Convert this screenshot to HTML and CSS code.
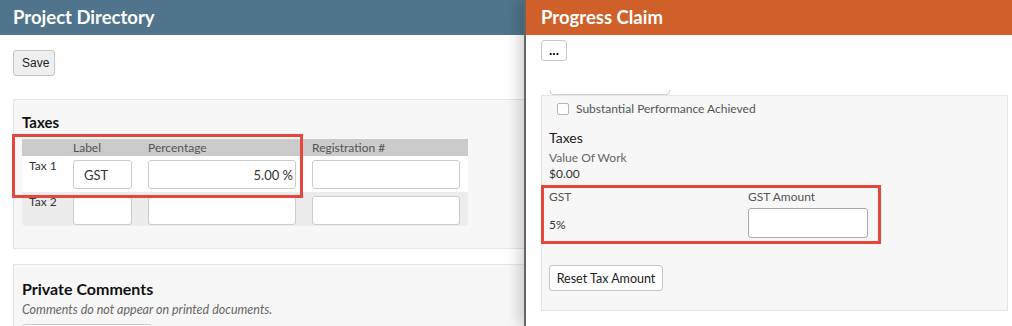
FILE: index.html
```html
<!DOCTYPE html>
<html lang="en">
<head>
  <meta charset="UTF-8" />
  <meta name="viewport" content="width=device-width, initial-scale=1.0" />
  <title>Project Directory</title>
  <link rel="stylesheet" href="styles.css">
</head>
<body>
  <div class="panes">
    <section class="pane pane-left">
      <header class="pane-header">Project Directory</header>
      <div class="pane-body">
        <button class="btn btn-save">Save</button>

        <div class="card card-taxes">
          <h2>Taxes</h2>
          <div class="tax-table">
            <div class="tax-row tax-head">
              <div class="col-name"></div>
              <div class="col-label">Label</div>
              <div class="col-pct">Percentage</div>
              <div class="col-reg">Registration #</div>
            </div>
            <div class="tax-row">
              <div class="col-name">Tax 1</div>
              <div class="col-label"><input class="field" value="GST"></div>
              <div class="col-pct"><input class="field field-num" value="5.00 %"></div>
              <div class="col-reg"><input class="field"></div>
            </div>
            <div class="tax-row tax-alt">
              <div class="col-name">Tax 2</div>
              <div class="col-label"><input class="field"></div>
              <div class="col-pct"><input class="field"></div>
              <div class="col-reg"><input class="field"></div>
            </div>
            <div class="mark mark-table"></div>
          </div>
        </div>

        <div class="card card-comments">
          <h2>Private Comments</h2>
          <p class="hint">Comments do not appear on printed documents.</p>
          <input class="field field-comment">
        </div>
      </div>
    </section>

    <section class="pane pane-right">
      <header class="pane-header">Progress Claim</header>
      <div class="pane-body">
        <button class="btn btn-more">...</button>
        <div class="stub"></div>

        <div class="card card-claim">
          <label class="check-row"><span class="check"></span>Substantial Performance Achieved</label>

          <h3>Taxes</h3>
          <div class="caption">Value Of Work</div>
          <div class="value">$0.00</div>

          <div class="gst-box">
            <div class="gst-rate">
              <div class="caption">GST</div>
              <div class="value rate">5%</div>
            </div>
            <div class="gst-amount">
              <div class="caption">GST Amount</div>
              <input class="field field-amount">
            </div>
          </div>

          <button class="btn btn-reset">Reset Tax Amount</button>
        </div>
      </div>
    </section>
  </div>
</body>
</html>
```

FILE: styles.css
```css
* {
  box-sizing: border-box;
}

html, body {
  margin: 0;
  padding: 0;
  height: 100%;
  overflow: hidden;
  font-family: Lato, 'Open Sans', sans-serif;
  color: #333;
  background: #fff;
}

.panes {
  display: flex;
  height: 100vh;
}

.pane-left {
  width: 524px;
  flex-shrink: 0;
  overflow: hidden;
}

.pane-right {
  flex: 1;
  position: relative;
  z-index: 1;
  background: #fff;
  border-left: 2px solid #666;
  box-shadow: -5px 0 14px rgba(0, 0, 0, 0.18);
}

.pane-header {
  height: 35px;
  line-height: 35px;
  padding-left: 13px;
  color: #fff;
  font-size: 18.5px;
  font-weight: 700;
}

.pane-left .pane-header { background: #50748b; }
.pane-right .pane-header { background: #d0602a; padding-left: 15px; }

.pane-left .pane-body {
  padding-left: 13px;
}

.pane-right .pane-body {
  padding: 5px 4px 0 15px;
}

/* buttons and fields */
.btn {
  display: block;
  height: 26px;
  padding: 0 8px;
  border: 1px solid #c6c6c6;
  border-radius: 3px;
  color: #222;
  cursor: pointer;
}

.btn-save {
  margin-top: 15px;
  width: 42px;
  background: #efefef;
  font-family: 'Liberation Sans', Arial, sans-serif;
  font-size: 12px;
}

.btn-more {
  width: 26px;
  height: 21px;
  padding: 0;
  background: #fff;
  border-color: #c8c8c8;
  font-family: 'Liberation Sans', Arial, sans-serif;
  font-size: 12px;
  font-weight: 700;
  line-height: 12px;
  color: #000;
}

.btn-reset {
  margin-top: 21px;
  width: 114px;
  padding: 0;
  background: #fff;
  font-family: Lato, sans-serif;
  font-size: 12.5px;
}

.field {
  display: block;
  width: 100%;
  height: 29px;
  padding: 0 10px;
  border: 1px solid #ccc;
  border-radius: 3px;
  background: #fff;
  font-family: Lato, sans-serif;
  font-size: 13px;
  color: #333;
}

.field-num {
  text-align: right;
  padding-right: 2px;
}

/* cards */
.card {
  background: #f7f7f7;
  border: 1px solid #e6e6e6;
}

.card h2 {
  margin: 0;
  font-size: 15px;
  line-height: 18px;
  font-weight: 700;
  color: #111;
}

.card-taxes {
  margin-top: 23px;
  border-right: none;
  padding: 13px 0 22px 8px;
}

.card-taxes h2 {
  margin-bottom: 8px;
}

.card-comments {
  margin-top: 15px;
  border-right: none;
  border-bottom: none;
  height: 80px;
  padding: 14px 0 0 8px;
}

.card-comments h2 {
  font-size: 16px;
  line-height: 20px;
}

.hint {
  margin: 3px 0 6px;
  font-size: 12.5px;
  line-height: 16px;
  font-style: italic;
  color: #666;
}

.field-comment {
  width: 130px;
}

/* tax table */
.tax-table {
  position: relative;
  width: 446px;
}

.tax-row {
  display: flex;
  padding: 4px 8px 3px 0;
  background: #fff;
}

.tax-row.tax-head {
  height: 17px;
  padding: 0 8px 0 0;
  background: #cbcbcb;
  font-size: 12px;
  line-height: 17px;
  color: #555;
}

.tax-row.tax-alt {
  background: #ececec;
  padding-bottom: 1px;
  border-radius: 0 0 4px 4px;
}

.col-name {
  width: 51px;
  padding-left: 7px;
  font-size: 12px;
  line-height: 12px;
  color: #333;
}

.tax-head .col-name { line-height: 17px; }

.col-label { width: 59px; }
.col-pct { width: 148px; margin-left: 16px; }
.col-reg { width: 148px; margin-left: 16px; }

/* annotation boxes */
.mark {
  position: absolute;
  border: 3px solid #e8453c;
  pointer-events: none;
}

.mark-table {
  left: -10px;
  top: -5px;
  width: 291px;
  height: 64px;
}

/* progress claim */
.stub {
  width: 120px;
  height: 5px;
  margin: 29px 0 0 9px;
  border: 1px solid #d2d2d2;
  border-top: none;
  border-radius: 0 0 4px 4px;
}

.card-claim {
  padding: 4px 8px 19px 7px;
}

.check-row {
  display: flex;
  align-items: center;
  gap: 7px;
  padding-left: 8px;
  font-size: 12px;
  line-height: 18px;
  color: #555;
}

.check {
  width: 12px;
  height: 12px;
  border: 1px solid #b5b5b5;
  border-radius: 2px;
  background: #fff;
}

.card-claim h3 {
  margin: 11px 0 3px;
  font-size: 14px;
  line-height: 18px;
  font-weight: 400;
  color: #222;
}

.caption {
  font-size: 12px;
  line-height: 16px;
  color: #666;
}

.value {
  font-size: 12px;
  line-height: 16px;
  color: #333;
}

.gst-box {
  display: flex;
  width: 340px;
  margin: 3px 0 0 -8px;
  padding: 1px 0 3px 5px;
  border: 3px solid #e8453c;
}

.gst-rate {
  width: 199px;
}

.gst-rate .caption,
.gst-amount .caption {
  color: #555;
}

.rate {
  margin-top: 12px;
}

.field-amount {
  width: 120px;
  height: 30px;
  margin-top: 3px;
  border-color: #aaa;
}
```
